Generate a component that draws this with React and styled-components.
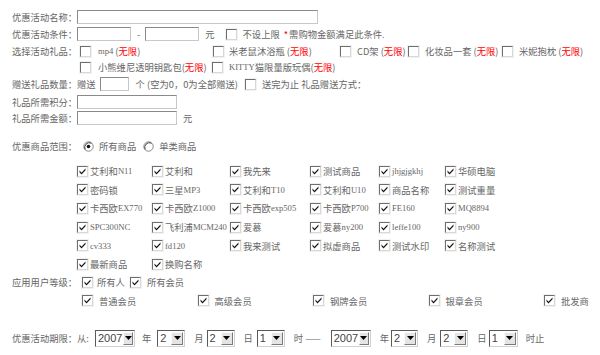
import React from "react";
import styled, { createGlobalStyle } from "styled-components";

const Global = createGlobalStyle`
  html, body { margin: 0; padding: 0; background: #fff; }
  body {
    font-family: "Noto Sans CJK SC", "Liberation Sans", sans-serif;
    font-size: 9.3px;
    color: #666;
  }
`;

const Form = styled.div`
  width: 600px;
  height: 355px;
  padding: 9px 0 0 12px;
  box-sizing: border-box;
  overflow: hidden;
`;

const Row = styled.div`
  display: flex;
  align-items: center;
  height: ${(p) => p.$h || 16}px;
  margin-top: ${(p) => p.$mt || 0}px;
  white-space: nowrap;
`;

const Label = styled.span`
  width: 65px;
  flex: none;
`;

const TextInput = styled.span`
  display: inline-block;
  box-sizing: border-box;
  width: ${(p) => p.$w}px;
  height: 14px;
  border: 1px solid;
  border-color: #8a8a8a #c8c8c8 #c8c8c8 #8a8a8a;
  background: #fff;
  margin-right: ${(p) => p.$mr || 0}px;
`;

const Box = styled.span`
  display: inline-flex;
  align-items: center;
  justify-content: center;
  box-sizing: border-box;
  width: 11px;
  height: 11px;
  flex: none;
  background: #fff;
  border: 1px solid;
  border-color: #6e6e6e #d8d8d8 #d8d8d8 #6e6e6e;
  box-shadow: 0 0 0 1px #f1f1f1;
  margin-right: ${(p) => (p.$gap != null ? p.$gap : 6)}px;
`;

const Check = ({ on, gap }) => (
  <Box $gap={gap}>
    {on && (
      <svg width="9" height="9" viewBox="0 0 9 9">
        <path d="M1.5 3.5 L3.5 5.8 L7.5 1.5 L7.5 3.2 L3.5 7.6 L1.5 5.3 Z" fill="#111" />
      </svg>
    )}
  </Box>
);

const Radio = ({ on }) => (
  <RadioWrap>
    <svg width="11" height="11" viewBox="0 0 11 11">
      <circle cx="5.5" cy="5.5" r="4.7" fill="#fff" stroke="#888" strokeWidth="1" />
      <path d="M2.2 8.5 A4.7 4.7 0 0 1 8.5 2.2" fill="none" stroke="#444" strokeWidth="1" />
      {on && <circle cx="5.5" cy="5.5" r="1.8" fill="#111" />}
    </svg>
  </RadioWrap>
);

const RadioWrap = styled.span`
  display: inline-flex;
  width: 11px;
  height: 11px;
  margin-right: 5px;
`;

const Red = styled.span`
  color: #f00;
`;

const Star = styled.span`
  color: #f00;
  margin: 0 1px 0 4px;
`;

const Latin = styled.span`
  font-family: "Liberation Serif", "Noto Sans CJK SC", serif;
  font-size: 8.6px;
`;

const Item = styled.span`
  display: inline-flex;
  align-items: center;
  width: ${(p) => (p.$w ? `${p.$w}px` : "auto")};
  flex: none;
`;

const Gifts = styled.div`
  display: flex;
  align-items: center;
  padding-left: ${(p) => (p.$pl != null ? p.$pl : 68)}px;
`;

const Spacer = styled.span`
  display: inline-block;
  width: ${(p) => p.$w}px;
  flex: none;
`;

const Grid = styled.div`
  display: grid;
  grid-template-columns: 75px 78px 80px 69px 66px auto;
  grid-auto-rows: 18.6px;
  align-items: center;
  padding-left: 65px;
  margin-top: 8px;
`;

const Cell = styled.span`
  display: inline-flex;
  align-items: center;
`;

const Members = styled.div`
  display: grid;
  grid-template-columns: repeat(5, 115.5px);
  align-items: center;
  height: 16px;
  margin-top: 2px;
  padding-left: 70px;
`;

const Sel = styled.span`
  display: inline-flex;
  align-items: stretch;
  box-sizing: border-box;
  width: ${(p) => p.$w}px;
  height: 17px;
  border: 1px solid;
  border-color: #5a5a5a #d0d0d0 #d0d0d0 #5a5a5a;
  background: #fff;
  margin: 0 ${(p) => p.$mr || 7}px 0 0;
`;

const SelText = styled.span`
  flex: 1;
  font-family: "Liberation Sans", Arial, sans-serif;
  font-size: 11px;
  line-height: 14px;
  color: #444;
  padding-left: 2px;
`;

const SelBtn = styled.span`
  width: 12px;
  display: inline-flex;
  align-items: center;
  justify-content: center;
  margin: 1px;
  background: #e4e4e4;
  border: 1px solid;
  border-color: #fafafa #7a7a7a #7a7a7a #fafafa;
  box-sizing: border-box;
`;

const Select = ({ value, w, mr }) => (
  <Sel $w={w} $mr={mr}>
    <SelText>{value}</SelText>
    <SelBtn>
      <svg width="7" height="4" viewBox="0 0 7 4">
        <path d="M0 0 H7 L3.5 4 Z" fill="#000" />
      </svg>
    </SelBtn>
  </Sel>
);

const Gap = styled.span`
  display: inline-block;
  width: ${(p) => p.$w}px;
  flex: none;
`;

const goods = [
  ["艾利和", "N11"], ["艾利和"], ["我先来"], ["测试商品"], [null, "jhjgjgkhj"], ["华硕电脑"],
  ["密码锁"], ["三星", "MP3"], ["艾利和", "T10"], ["艾利和", "U10"], ["商品名称"], ["测试重量"],
  ["卡西欧", "EX770"], ["卡西欧", "Z1000"], ["卡西欧", "exp505"], ["卡西欧", "P700"], [null, "FE160"], [null, "MQ8894"],
  [null, "SPC300NC"], ["飞利浦", "MCM240"], ["爱慕"], ["爱慕", "ny200"], [null, "leffe100"], [null, "ny900"],
  [null, "cv333"], [null, "fd120"], ["我来测试"], ["拟虚商品"], ["测试水印"], ["名称测试"],
  ["最新商品"], ["换购名称"],
];

export default function App() {
  return (
    <>
      <Global />
      <Form>
        <Row $h={16}>
          <Label>优惠活动名称：</Label>
          <TextInput $w={241} />
        </Row>
        <Row $h={18}>
          <Label>优惠活动条件：</Label>
          <TextInput $w={54} />
          <Gap $w={6} />-<Gap $w={5} />
          <TextInput $w={54} $mr={6} />
          元<Gap $w={11} />
          <Check gap={6} />
          不设上限<Star>*</Star>需购物金额满足此条件.
        </Row>
        <Row $h={16}>
          <Label>选择活动礼品：</Label>
          <Gifts as="span" $pl={3}>
            <Item $w={133}><Check gap={7} /><Latin>mp4</Latin>&nbsp;(<Red>无限</Red>)</Item>
            <Item $w={127}><Check gap={5} />米老鼠沐浴瓶 (<Red>无限</Red>)</Item>
            <Item $w={68}><Check gap={6} />CD架 (<Red>无限</Red>)</Item>
            <Item $w={94}><Check gap={6} />化妆品一套 (<Red>无限</Red>)</Item>
            <Item><Check gap={6} />米妮抱枕 (<Red>无限</Red>)</Item>
          </Gifts>
        </Row>
        <Row $h={16}>
          <Gifts>
            <Item $w={132}><Check gap={7} />小熊维尼透明钥匙包(<Red>无限</Red>)</Item>
            <Item><Check gap={6} /><Latin>KITTY</Latin>猫限量版玩偶(<Red>无限</Red>)</Item>
          </Gifts>
        </Row>
        <Row $h={18}>
          <Label>赠送礼品数量：</Label>
          赠送<Gap $w={4} />
          <TextInput $w={29} $mr={7} />
          个 (空为0，0为全部赠送)<Gap $w={7} />
          <Check gap={6} />
          送完为止 礼品赠送方式：
        </Row>
        <Row $h={17}>
          <Label>礼品所需积分：</Label>
          <TextInput $w={100} />
        </Row>
        <Row $h={16}>
          <Label>礼品所需金额：</Label>
          <TextInput $w={100} $mr={6} />
          元
        </Row>
        <Row $h={16} $mt={12}>
          <Label>优惠商品范围：</Label>
          <Spacer $w={6} />
          <Radio on />所有商品<Spacer $w={7} />
          <Radio />单类商品
        </Row>
        <Grid>
          {goods.map(([cn, en], i) => (
            <Cell key={i}>
              <Check on gap={2} />
              {cn}
              {en && <Latin>{en}</Latin>}
            </Cell>
          ))}
        </Grid>
        <Row $h={17}>
          <Label>应用用户等级：</Label>
          <Spacer $w={5} />
          <Check on gap={4} />所有人<Spacer $w={5} />
          <Check on gap={6} />所有会员
        </Row>
        <Members>
          <Cell><Check on gap={6} />普通会员</Cell>
          <Cell><Check on gap={6} />高级会员</Cell>
          <Cell><Check on gap={6} />钢牌会员</Cell>
          <Cell><Check on gap={6} />银章会员</Cell>
          <Cell><Check on gap={6} />批发商</Cell>
        </Members>
        <Row $h={19} $mt={20}>
          <Label>优惠活动期限：</Label>
          从:<Gap $w={6} />
          <Select value="2007" w={40} />年<Gap $w={6} />
          <Select value="2" w={28} mr={9} />月<Gap $w={3} />
          <Select value="2" w={28} mr={9} />日<Gap $w={4} />
          <Select value="1" w={28} mr={9} />时<Gap $w={2} />——<Gap $w={10} />
          <Select value="2007" w={40} mr={9} />年<Gap $w={2} />
          <Select value="2" w={27} mr={9} />月<Gap $w={4} />
          <Select value="2" w={28} mr={9} />日<Gap $w={2} />
          <Select value="1" w={29} mr={8} />时止
        </Row>
      </Form>
    </>
  );
}
